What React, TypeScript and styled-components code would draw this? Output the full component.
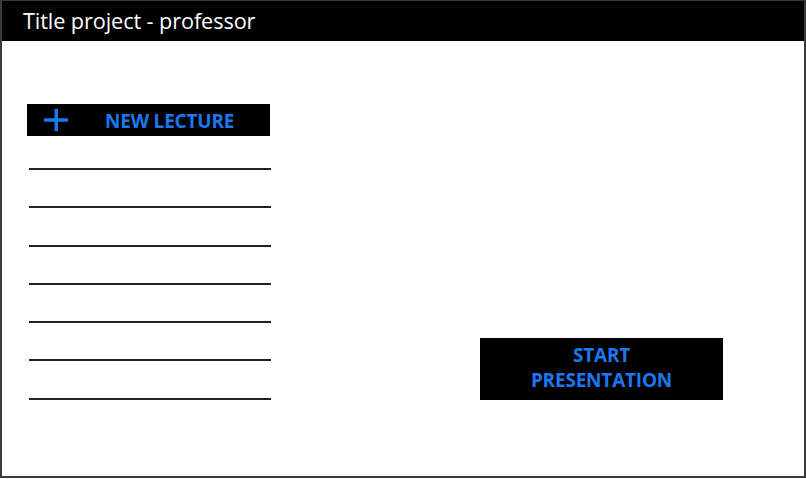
import React from 'react';
import styled, { createGlobalStyle } from 'styled-components';

const GlobalStyle = createGlobalStyle`
  html, body {
    margin: 0;
    padding: 0;
    background: #ffffff;
  }
  * {
    box-sizing: border-box;
  }
`;

const Frame = styled.div`
  width: 806px;
  height: 478px;
  border: 2px solid #3a3a3a;
  border-top-width: 1px;
  display: flex;
  flex-direction: column;
  background: #ffffff;
  overflow: hidden;
`;

const TitleBar = styled.header`
  height: 40px;
  background: #000000;
  color: #ffffff;
  font-family: "Open Sans", "Liberation Sans", sans-serif;
  font-size: 21.7px;
  letter-spacing: -0.1px;
  display: flex;
  align-items: center;
  padding-left: 21px;
  padding-bottom: 1px;
`;

const Main = styled.main`
  flex: 1;
  display: flex;
  padding: 63px 0 0 25px;
  gap: 207px;
`;

const LectureColumn = styled.section`
  display: flex;
  flex-direction: column;
  width: 246px;
`;

const BlueButton = styled.button`
  background: #000000;
  border: none;
  color: #1a78f2;
  font-family: "Open Sans", "Liberation Sans", sans-serif;
  font-weight: 700;
  font-size: 19px;
  letter-spacing: -0.2px;
  cursor: pointer;
  padding: 0;
`;

const NewLectureButton = styled(BlueButton)`
  width: 243px;
  height: 32px;
  display: flex;
  align-items: center;
  padding-left: 17px;
  padding-top: 2px;
  gap: 37px;
`;

const Line = styled.div<{ $first?: boolean }>`
  height: 2px;
  width: 242px;
  margin-left: 2px;
  margin-top: ${(p) => (p.$first ? '32px' : '36.3px')};
  background: #222222;
`;

const StartButton = styled(BlueButton)`
  width: 243px;
  height: 62px;
  margin-top: 234px;
  line-height: 25px;
  padding-bottom: 2px;
  text-align: center;
`;

const PlusIcon = () => (
  <svg width="24" height="22" viewBox="0 0 24 22" style={{ marginTop: '-2px' }}>
    <rect x="10.5" y="0" width="3.5" height="22" fill="#1a78f2" />
    <rect x="0" y="9.25" width="24" height="3.5" fill="#1a78f2" />
  </svg>
);

const App: React.FC = () => {
  const lines = [0, 1, 2, 3, 4, 5, 6];
  return (
    <>
      <GlobalStyle />
      <Frame>
        <TitleBar>Title project - professor</TitleBar>
        <Main>
          <LectureColumn>
            <NewLectureButton>
              <PlusIcon />
              NEW LECTURE
            </NewLectureButton>
            {lines.map((i) => (
              <Line key={i} $first={i === 0} />
            ))}
          </LectureColumn>
          <StartButton>
            START
            <br />
            PRESENTATION
          </StartButton>
        </Main>
      </Frame>
    </>
  );
};

export default App;
